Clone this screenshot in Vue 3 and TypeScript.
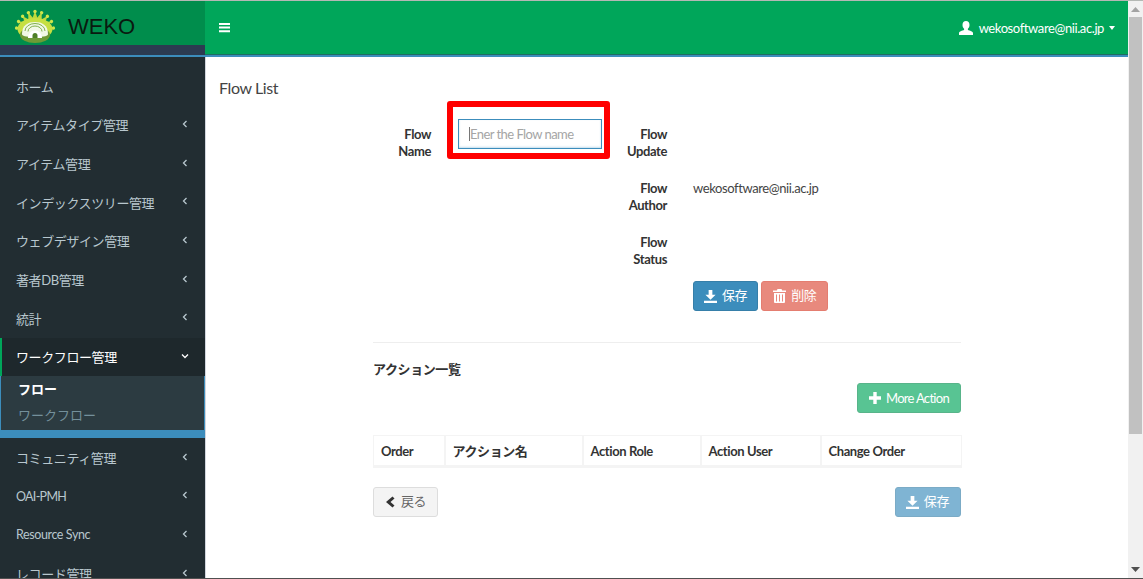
<script setup lang="ts">
const topMenu = ['ホーム', 'アイテムタイプ管理', 'アイテム管理', 'インデックスツリー管理', 'ウェブデザイン管理', '著者DB管理', '統計']
const lowerMenu = ['コミュニティ管理', 'OAI-PMH', 'Resource Sync', 'レコード管理']
const columns = ['Order', 'アクション名', 'Action Role', 'Action User', 'Change Order']
const rays = [-84, -63, -42, -21, 0, 21, 42, 63, 84]
</script>

<template>
  <div class="page">
    <div class="main">
      <header class="header">
        <div class="brand">
          <div class="logo-row">
            <svg class="logo" width="44" height="34" viewBox="0 1 44 34">
              <g v-for="r in rays" :key="r" :transform="`rotate(${r} 22 22)`">
                <path d="M18.800 12 L22 3 L25.200 12 Z" fill="#bcd93c" />
                <circle cx="22" cy="3.500" r="1.700" fill="#cfe64a" />
              </g>
              <ellipse cx="22" cy="21" rx="17.500" ry="11" fill="#c6df42" />
              <ellipse cx="22" cy="27" rx="15" ry="8" fill="#6f9a35" />
              <path d="M9 26 C9 17 15 14 22 14 C29 14 35 17 35 26 C35 28 32 29 22 29 C12 29 9 28 9 26 Z" fill="#f2f8e6" />
              <path d="M12 23 a10 7.500 0 0 1 20 0 M15 23.500 a7 5.500 0 0 1 14 0" fill="none" stroke="#7fb04a" stroke-width="1" />
              <path d="M15 30 C15 26 18 22.500 22 22.500 C26 22.500 29 26 29 30 Z" fill="#fff" />
              <path d="M19.500 30 v-2.500 a2.500 2.500 0 0 1 5 0 v2.500 z" fill="#4f7f28" />
            </svg>
            <span class="logo-text">WEKO</span>
          </div>
          <div class="brand-band"></div>
        </div>
        <div class="navbar">
          <svg class="burger" width="11" height="11" viewBox="0 0 11 11">
            <path d="M0 1h11v2H0zM0 4.600h11v2H0zM0 8.200h11v2H0z" fill="#fff" />
          </svg>
          <div class="user">
            <svg width="14" height="14" viewBox="0 0 14 14">
              <path d="M7 0c2.200 0 3.500 1.700 3.500 3.900 0 1.600-.7 3-1.600 3.800v1.200c1.800.6 5.100 1.400 5.100 3.200V14H0v-1.900c0-1.800 3.300-2.600 5.100-3.200V7.700C4.200 6.900 3.500 5.500 3.500 3.900 3.500 1.700 4.800 0 7 0z" fill="#fff" />
            </svg>
            <span>wekosoftware@nii.ac.jp</span>
            <i class="caret"></i>
          </div>
        </div>
      </header>

      <div class="body">
        <aside class="sidebar">
          <ul class="menu">
            <li v-for="(m, i) in topMenu" :key="m" class="item">
              <span>{{ m }}</span>
              <svg v-if="i > 0" class="chev" width="6" height="8" viewBox="0 0 6 8"><path d="M4.500 1 L1.500 4 L4.500 7" fill="none" stroke="#b8c7ce" stroke-width="1.300" /></svg>
            </li>
            <li class="item active">
              <span>ワークフロー管理</span>
              <svg class="chev" width="8" height="6" viewBox="0 0 8 6"><path d="M1 1.500 L4 4.500 L7 1.500" fill="none" stroke="#fff" stroke-width="1.300" /></svg>
            </li>
            <li class="submenu">
              <div class="sub current">フロー</div>
              <div class="sub">ワークフロー</div>
            </li>
            <li class="sub-band"></li>
            <li v-for="m in lowerMenu" :key="m" class="item" :class="{ tight: m === 'OAI-PMH', latin: m === 'Resource Sync' }">
              <span>{{ m }}</span>
              <svg class="chev" width="6" height="8" viewBox="0 0 6 8"><path d="M4.500 1 L1.500 4 L4.500 7" fill="none" stroke="#b8c7ce" stroke-width="1.300" /></svg>
            </li>
          </ul>
        </aside>

        <main class="content">
          <h1 class="title">Flow List</h1>
          <div class="panel">
            <div class="form">
              <label class="label">Flow<br />Name</label>
              <div class="field">
                <div class="input-wrap">
                  <input class="input" type="text" placeholder="Ener the Flow name" />
                  <i class="cursor"></i>
                  <div class="highlight"></div>
                </div>
              </div>
              <label class="label">Flow<br />Update</label>
              <div class="value"></div>

              <div></div><div></div>
              <label class="label">Flow<br />Author</label>
              <div class="value">wekosoftware@nii.ac.jp</div>

              <div></div><div></div>
              <label class="label">Flow<br />Status</label>
              <div class="value"></div>

              <div></div><div></div>
              <div></div>
              <div class="actions">
                <button class="btn primary" type="button">
                  <svg width="13" height="13" viewBox="0 0 14 14"><path d="M5 0h4v5h3.500L7 10.500 1.500 5H5zM0 11.500h14V14H0z" fill="#fff" /></svg>
                  <span>保存</span>
                </button>
                <button class="btn danger" type="button">
                  <svg width="13" height="14" viewBox="0 0 13 14"><path d="M4.500 0h4l.7 1.500H13V3H0V1.500h3.800zM1 4h11v9a1 1 0 0 1-1 1H2a1 1 0 0 1-1-1zM3 5.500v7h1v-7zm3 0v7h1v-7zm3 0v7h1v-7z" fill="#fff" fill-rule="evenodd" /></svg>
                  <span>削除</span>
                </button>
              </div>
            </div>

            <hr class="rule" />
            <h2 class="section">アクション一覧</h2>
            <div class="more-row">
              <button class="btn success" type="button">
                <svg width="12" height="12" viewBox="0 0 12 12"><path d="M4.300 0h3.400v4.300H12v3.400H7.700V12H4.300V7.700H0V4.300h4.300z" fill="#fff" /></svg>
                <span>More Action</span>
              </button>
            </div>
            <table class="table">
              <colgroup>
                <col class="c1" /><col class="c2" /><col class="c3" /><col class="c4" /><col class="c5" />
              </colgroup>
              <thead>
                <tr><th v-for="c in columns" :key="c">{{ c }}</th></tr>
              </thead>
            </table>
            <div class="footer">
              <button class="btn back" type="button">
                <svg width="10" height="12" viewBox="0 0 10 12"><path d="M7.500 0.500 L9.500 2.500 L5.500 6 L9.500 9.500 L7.500 11.500 L1 6 Z" fill="#333" /></svg>
                <span>戻る</span>
              </button>
              <button class="btn primary faded" type="button">
                <svg width="13" height="13" viewBox="0 0 14 14"><path d="M5 0h4v5h3.500L7 10.500 1.500 5H5zM0 11.500h14V14H0z" fill="#fff" /></svg>
                <span>保存</span>
              </button>
            </div>
          </div>
        </main>
      </div>
    </div>

    <div class="scrollbar">
      <svg class="arrow" width="9" height="5" viewBox="0 0 9 5"><path d="M4.500 0L9 5H0z" fill="#a3a3a3" /></svg>
      <div class="track"><div class="thumb"></div></div>
      <svg class="arrow" width="9" height="5" viewBox="0 0 9 5"><path d="M0 0h9L4.500 5z" fill="#505050" /></svg>
    </div>
  </div>
</template>

<style>
html, body { margin: 0; overflow: hidden; }
</style>

<style scoped>
* { box-sizing: border-box; }
.page {
  width: 1143px;
  height: 579px;
  display: flex;
  overflow: hidden;
  border-top: 1px solid #b4b8b4;
  border-bottom: 1px solid #505050;
  font-family: Lato, "Noto Sans CJK JP", sans-serif;
  font-size: 13px;
  letter-spacing: -.4px;
  color: #333;
  background: #fff;
}
.main { flex: 1; min-width: 0; display: flex; flex-direction: column; }
.header { display: flex; height: 56px; flex: none; border-bottom: 2px solid #3c8dbc; }
.brand { width: 205px; flex: none; display: flex; flex-direction: column; }
.logo-row {
  height: 44px;
  background: #008d4c;
  display: flex;
  align-items: center;
  padding: 6px 0 0 13px;
}
.logo-text {
  font-family: "Liberation Sans", sans-serif;
  font-size: 22px;
  letter-spacing: 0;
  color: #0a1a10;
  margin: 2px 0 0 11px;
}
.brand-band { flex: 1; background: #2c3b51; }
.navbar {
  flex: 1;
  background: #00a65a;
  border-bottom: 1px solid #1f6d62;
  display: flex;
  align-items: center;
  justify-content: space-between;
  padding: 0 13px 0 14px;
}
.user { display: flex; align-items: center; color: #fff; gap: 6px; font-size: 13px; }
.caret {
  margin-left: -1px;
  border-left: 3.500px solid transparent;
  border-right: 3.500px solid transparent;
  border-top: 4px solid #fff;
}
.body { flex: 1; min-height: 0; display: flex; }
.sidebar { width: 205px; flex: none; background: #222d32; overflow: hidden; }
.menu { list-style: none; margin: 0; padding: 10px 0 0; }
.item {
  height: 38.670px;
  display: flex;
  align-items: center;
  justify-content: space-between;
  padding: 0 17px 0 16px;
  color: #b8c7ce;
}
.chev { margin-bottom: 2px; }
.item.tight { font-size: 12.500px; letter-spacing: -.7px; }
.item.latin { font-size: 12.500px; }
.item.active {
  color: #fff;
  background: #1e282c;
  border-left: 2px solid #00a65a;
  padding-left: 14px;
}
.item.active .chev { margin-right: -1px; }
.submenu {
  background: #2c3b41;
  border: 1px solid #3c8dbc;
  border-top: 0;
  border-bottom: 0;
  height: 54px;
  padding-top: 1px;
}
.sub { height: 26px; line-height: 24px; padding-left: 17px; color: #74909b; letter-spacing: 0; }
.sub.current { color: #fff; font-weight: 700; }
.sub-band { height: 8px; background: #3c8dbc; }
.content { flex: 1; min-width: 0; background: #fff; border-left: 1px solid #d2d6de; }
.title { margin: 0; padding: 22px 0 0 13px; font-size: 16px; font-weight: 400; line-height: 18px; color: #444; }
.panel { width: 588px; margin: 22px auto 0; }
.form { display: grid; grid-template-columns: 58px 178px 58px 1fr; grid-auto-rows: 54px; }
.label { text-align: right; font-weight: 700; line-height: 17px; padding-top: 7px; color: #333; }
.field { padding-left: 27px; }
.value { padding: 7px 0 0 26px; line-height: 17px; color: #444; }
.input-wrap { position: relative; width: 144px; height: 30px; }
.input {
  width: 100%;
  height: 30px;
  border: 1px solid #3c8dbc;
  box-shadow: inset 0 -1px 2px rgba(60,141,188,.3);
  padding: 0 11px;
  font: inherit;
  letter-spacing: -.55px;
  outline: 0;
}
.input::placeholder { color: #a5a5a5; opacity: 1; }
.cursor { position: absolute; left: 11px; top: 8px; width: 1px; height: 14px; background: #777; }
.highlight {
  position: absolute;
  left: -11px;
  top: -18px;
  width: 163px;
  height: 58px;
  border: 6px solid #ff0000;
  border-radius: 3px;
  pointer-events: none;
}
.actions { display: flex; gap: 3px; padding-left: 26px; align-items: flex-start; }
.btn {
  height: 30px;
  display: inline-flex;
  align-items: center;
  gap: 5px;
  padding: 0 10px;
  border: 1px solid transparent;
  border-radius: 3px;
  font: inherit;
  letter-spacing: inherit;
  color: #fff;
}
.btn span { line-height: 1; margin-top: -2px; }
.primary { background: #3c8dbc; border-color: #367fa9; }
.danger { background: #dd4b39; border-color: #d73925; opacity: .65; padding: 0 11px; }
.success { background: #00a65a; border-color: #008d4c; opacity: .65; letter-spacing: -.7px; padding: 0 11px; }
.success span { margin-top: 0; }
.faded { opacity: .65; padding-right: 11px; }
.rule { border: 0; border-top: 1px solid #eee; margin: 7px 0 0; }
.section { margin: 18px 0 0; font-size: 13px; line-height: 17px; font-weight: 700; color: #333; }
.more-row { display: flex; justify-content: flex-end; margin-top: 5px; }
.table { width: 100%; margin-top: 22px; border-collapse: collapse; table-layout: fixed; border: 1px solid #f4f4f4; border-bottom: 3px solid #f4f4f4; }
.c1 { width: 71px; } .c2 { width: 138px; } .c3 { width: 118px; } .c4 { width: 120px; } .c5 { width: 141px; }
th {
  height: 31px;
  text-align: left;
  padding: 0 7px;
  border-right: 2px solid #f4f4f4;
  font-size: 13px;
  font-weight: 700;
  color: #333;
}
th:last-child { border-right: 0; }
.footer { display: flex; justify-content: space-between; margin-top: 19px; }
.back { background: #f4f4f4; border-color: #ddd; color: #666; padding: 0 11px; gap: 6px; }
.scrollbar {
  width: 15px;
  flex: none;
  background: #f1f1f1;
  display: flex;
  flex-direction: column;
  align-items: center;
}
.arrow { flex: none; margin: 6px 0; }
.track { flex: 1; align-self: stretch; padding: 0 1px; }
.thumb { height: 417px; background: #c1c1c1; margin-top: -1px; }
</style>
